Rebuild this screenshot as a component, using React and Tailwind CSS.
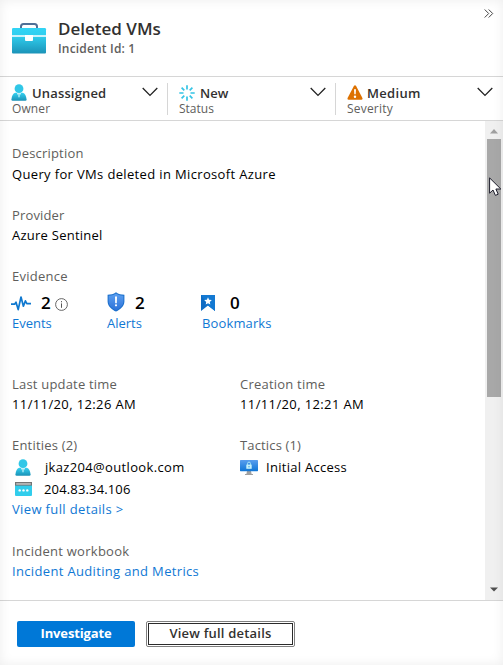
import React from 'react';

function Briefcase() {
  return (
    <svg width="35" height="32" viewBox="0 0 35 32" className="shrink-0">
      <defs>
        <linearGradient id="caseTop" x1="0" y1="0" x2="0" y2="1">
          <stop offset="0" stopColor="#32d4f5" />
          <stop offset="1" stopColor="#30cff0" />
        </linearGradient>
        <linearGradient id="caseBottom" x1="0" y1="0" x2="0" y2="1">
          <stop offset="0" stopColor="#2fcbeb" />
          <stop offset="1" stopColor="#1b93b8" />
        </linearGradient>
      </defs>
      <path d="M9 6.5V4.5Q9 2 11.5 2H22.5Q25 2 25 4.5V6.5" fill="none" stroke="#4f6f96" strokeWidth="2" />
      <path d="M1.2 6H32.8Q34 6 34 7.2V13.2H0V7.2Q0 6 1.2 6Z" fill="url(#caseTop)" />
      <path d="M0 14.8H34V30.6Q34 31.5 33 31.5H1Q0 31.5 0 30.6Z" fill="url(#caseBottom)" />
      <path d="M13 13H21V18Q21 19 20 19H14Q13 19 13 18Z" fill="#fff" />
    </svg>
  );
}

function Person({ className }) {
  return (
    <svg width="16" height="17" viewBox="0 0 16 17" className={className}>
      <defs>
        <linearGradient id="personFill" x1="0" y1="0" x2="0" y2="1">
          <stop offset="0" stopColor="#34d2f2" />
          <stop offset="1" stopColor="#1a91b6" />
        </linearGradient>
      </defs>
      <path d="M1.7 16.8Q.3 16.8 .4 15.5C.8 12 2 9.2 4.2 8.7H11.8C14 9.2 15.2 12 15.6 15.5Q15.7 16.8 14.3 16.8Z" fill="url(#personFill)" />
      <path d="M5.8 8.5L8 13.8L10.2 8.5Z" fill="#e8fafd" />
      <path d="M7.4 9.5H8.6L8.9 12L8 13.6L7.1 12Z" fill="#7fdcee" />
      <circle cx="8" cy="4.7" r="4.4" fill="#30c7e7" />
    </svg>
  );
}

function Burst() {
  return (
    <svg width="16" height="16" viewBox="0 0 16 16" fill="none" stroke="#35c4e5" strokeWidth="1.7" className="shrink-0">
      <path d="M8 .3V4.5M8 11.5V15.7M.3 8H4.5M11.5 8H15.7" />
      <path d="M2.6 2.6L5.3 5.3M10.7 10.7L13.4 13.4M2.6 13.4L5.3 10.7M10.7 5.3L13.4 2.6" />
    </svg>
  );
}

function Warning() {
  return (
    <svg width="16" height="15" viewBox="0 0 16 15" className="shrink-0">
      <path d="M6.9.9Q8 -.6 9.1.9L15.4 13Q15.9 14.6 14.3 14.8H1.7Q.1 14.6.6 13Z" fill="#dd7100" />
      <path d="M7 4.2H9L8.7 9.3H7.3Z" fill="#fff" />
      <circle cx="8" cy="11.7" r="1.2" fill="#fff" />
    </svg>
  );
}

function Chevron({ className }) {
  return (
    <svg width="16" height="10" viewBox="0 0 16 10" className={className}>
      <path d="M.7 1L8 8.4L15.3 1" fill="none" stroke="#222" strokeWidth="1.3" />
    </svg>
  );
}

function Pulse() {
  return (
    <svg width="20" height="17" viewBox="0 0 20 17" className="-ml-px shrink-0">
      <path d="M0 9.2H3.6L5 7.2L7.2 14.6L10 2L12.4 11.2L14.4 5.8L15.8 8.6H20" fill="none" stroke="#0f78cf" strokeWidth="1.7" strokeLinejoin="round" />
    </svg>
  );
}

function Shield() {
  return (
    <svg width="18" height="20" viewBox="0 0 18 20" className="-mt-[2px] shrink-0">
      <defs>
        <linearGradient id="shieldFill" x1="0" y1="0" x2="0" y2="1">
          <stop offset="0" stopColor="#5c9ff0" />
          <stop offset="1" stopColor="#2d72d8" />
        </linearGradient>
      </defs>
      <path d="M9 .3C11.5 2.2 14 2.6 17.4 2.7V9.5C17.4 14.5 12.5 18 9 19.6C5.5 18 .6 14.5 .6 9.5V2.7C4 2.6 6.5 2.2 9 .3Z" fill="#1a6fcb" />
      <path d="M9 1.6C11.4 3.2 13.7 3.7 16.4 3.8V9.4C16.4 13.6 12.2 16.9 9 18.4C5.8 16.9 1.6 13.6 1.6 9.4V3.8C4.3 3.7 6.6 3.2 9 1.6Z" fill="url(#shieldFill)" />
      <path d="M8 4.6H10L9.8 11.2H8.2Z" fill="#fff" />
      <circle cx="9" cy="13.3" r="1.1" fill="#fff" />
    </svg>
  );
}

function Bookmark() {
  return (
    <svg width="14" height="16" viewBox="0 0 14 16" className="-ml-px shrink-0">
      <path d="M0 0H14V16L7 10.5L0 16Z" fill="#0f6cc4" />
      <path d="M0 0H14V16L7 10.5Z" fill="#1379d2" />
      <path d="M7 2.3L8.1 4.8L10.8 5.1L8.8 6.9L9.3 9.6L7 8.2L4.7 9.6L5.2 6.9L3.2 5.1L5.9 4.8Z" fill="#fff" />
    </svg>
  );
}

function Info() {
  return (
    <svg width="13" height="13" viewBox="0 0 13 13" className="mt-[2px] ml-[4px] shrink-0">
      <circle cx="6.5" cy="6.5" r="5.9" fill="none" stroke="#555" strokeWidth=".9" />
      <path d="M6.5 5.4V9.8M6.5 3.1V4.3" stroke="#555" strokeWidth="1" />
    </svg>
  );
}

function IpIcon() {
  return (
    <svg width="17" height="14" viewBox="0 0 17 14" className="shrink-0">
      <path d="M0 0H17V13Q17 14 16 14H1Q0 14 0 13Z" fill="#31cdec" />
      <path d="M0 0H17V3.6H0Z" fill="#747474" />
      <path d="M1.2 1.2H15.8V2.7H1.2Z" fill="#c4c4c4" />
      <circle cx="4.7" cy="8.4" r="1.2" fill="#fff" />
      <circle cx="8.5" cy="8.4" r="1.2" fill="#fff" />
      <circle cx="12.3" cy="8.4" r="1.2" fill="#fff" />
    </svg>
  );
}

function Monitor() {
  return (
    <svg width="18" height="15" viewBox="0 0 18 15" className="mt-px shrink-0">
      <defs>
        <linearGradient id="screenFill" x1="0" y1="0" x2="0" y2="1">
          <stop offset="0" stopColor="#5a9eee" />
          <stop offset="1" stopColor="#0f76d6" />
        </linearGradient>
      </defs>
      <path d="M7 11H11L11.6 14H13V15H5V14H6.4Z" fill="#a0a0a0" />
      <rect width="18" height="11.2" rx=".6" fill="url(#screenFill)" />
      <rect x="6.3" y="4.6" width="5.4" height="4.2" fill="#c5effa" />
      <path d="M7.5 5V3.6Q7.5 2.1 9 2.1T10.5 3.6V5" fill="none" stroke="#a5e4f7" strokeWidth="1" />
      <path d="M9 6V7.4" stroke="#349fd8" />
    </svg>
  );
}

function Selector({ icon, value, label, valueClass, labelClass, className, chevronClass }) {
  return (
    <div className={`flex h-8 justify-between ${className}`}>
      <div>
        <div className="flex h-[17px] items-center">
          {icon}
          <span className={`font-semibold text-[#323130] ${valueClass}`}>{value}</span>
        </div>
        <div className={`text-[12px] leading-[15px] text-[#605e5c] ${labelClass}`}>{label}</div>
      </div>
      <Chevron className={`mt-[3px] shrink-0 ${chevronClass}`} />
    </div>
  );
}

function Evidence({ icon, count, label, countClass, labelClass, info }) {
  return (
    <div className="w-[95px]">
      <div className="flex h-5 items-center">
        {icon}
        <span className={`text-[17px] font-semibold text-black ${countClass}`}>{count}</span>
        {info && <Info />}
      </div>
      <div className={`text-[#0f78d4] ${labelClass}`}>{label}</div>
    </div>
  );
}

export default function App() {
  return (
    <div className="relative flex h-[665px] w-[503px] flex-col overflow-hidden bg-white font-['Open_Sans','Noto_Sans',sans-serif] text-[13px] leading-5 whitespace-nowrap text-black">
      <header className="flex h-[77px] shrink-0 justify-between border-b border-[#d6d6d6] pl-3">
        <div className="flex">
          <div className="pt-[22px]"><Briefcase /></div>
          <div className="pt-[17px] pl-[11px]">
            <h1 className="text-[17px] leading-6 font-semibold text-[#323130]">Deleted VMs</h1>
            <p className="text-[12px] leading-[15px] font-semibold tracking-[0.18px] text-[#605e5c]">Incident Id: 1</p>
          </div>
        </div>
        <svg width="10" height="9" viewBox="0 0 10 9" className="mt-[9px] mr-[9px]" fill="none" stroke="#444" strokeWidth="1">
          <path d="M.7 .5L4.7 4.5L.7 8.5M4.7 .5L8.7 4.5L4.7 8.5" />
        </svg>
      </header>

      <section className="flex h-11 shrink-0 border-b border-[#d6d6d6] pt-[6px] pl-[11px]">
        <Selector icon={<Person className="shrink-0" />} value="Unassigned" label="Owner" valueClass="ml-[5px] tracking-[0.15px]" labelClass="pl-px tracking-[0.1px]" className="w-[157px] border-r border-[#d6d6d6] pt-px" chevronClass="mr-[9px]" />
        <Selector icon={<Burst />} value="New" label="Status" valueClass="ml-[5px]" labelClass="" className="w-[168px] border-r border-[#d6d6d6] pt-px pl-[11px]" chevronClass="mr-[9px]" />
        <Selector icon={<Warning />} value="Medium" label="Severity" valueClass="ml-[4px] tracking-[0.3px]" labelClass="tracking-[0.2px]" className="w-[157px] pt-px pl-[11px]" chevronClass="" />
      </section>

      <main className="flex h-[479px] shrink-0">
        <div className="w-[485px] pt-[22px] pl-[12px]">
          <p className="tracking-[0.2px] text-[#605e5c]">Description</p>
          <p className="mt-px tracking-[0.35px]">Query for VMs deleted in Microsoft Azure</p>
          <p className="mt-[21px] tracking-[0.15px] text-[#605e5c]">Provider</p>
          <p className="tracking-[0.25px]">Azure Sentinel</p>
          <p className="mt-[21px] tracking-[0.25px] text-[#605e5c]">Evidence</p>
          <div className="flex pt-[7px]">
            <Evidence icon={<Pulse />} count="2" label="Events" countClass="ml-[10px]" labelClass="" info />
            <Evidence icon={<Shield />} count="2" label="Alerts" countClass="ml-[10px]" labelClass="" />
            <Evidence icon={<Bookmark />} count="0" label="Bookmarks" countClass="ml-[15px]" labelClass="tracking-[0.13px]" />
          </div>
          <div className="mt-[41px] flex">
            <div className="w-[228px]">
              <p className="tracking-[0.2px] text-[#605e5c]">Last update time</p>
              <p className="tracking-[0.38px]">11/11/20, 12:26 AM</p>
            </div>
            <div>
              <p className="tracking-[0.22px] text-[#605e5c]">Creation time</p>
              <p className="tracking-[0.38px]">11/11/20, 12:21 AM</p>
            </div>
          </div>
          <div className="mt-[21px] flex">
            <div className="w-[228px]">
              <p className="tracking-[0.2px] text-[#605e5c]">Entities (2)</p>
              <div className="mt-px flex h-[22px] items-center pl-[3px]"><Person className="shrink-0" /><span className="ml-[14px] tracking-[0.34px]">jkaz204@outlook.com</span></div>
              <div className="flex h-[22px] items-center pl-[3px]"><IpIcon /><span className="ml-[12px] tracking-[0.15px]">204.83.34.106</span></div>
              <p className="-mt-px tracking-[0.36px] text-[#0f78d4]">View full details &gt;</p>
            </div>
            <div>
              <p className="tracking-[0.15px] text-[#605e5c]">Tactics (1)</p>
              <div className="mt-px flex h-[22px] items-center"><Monitor /><span className="ml-[8px] tracking-[0.28px]">Initial Access</span></div>
            </div>
          </div>
          <p className="mt-[22px] tracking-[0.27px] text-[#605e5c]">Incident workbook</p>
          <p className="tracking-[0.34px] text-[#0f78d4]">Incident Auditing and Metrics</p>
        </div>
        <div className="flex w-[18px] flex-col items-center bg-[#f0f0f0]">
          <svg width="8" height="5" viewBox="0 0 8 5" className="mt-[8px]"><path d="M4 0L8 4.5H0Z" fill="#a0a0a0" /></svg>
          <div className="mt-[5px] h-[258px] w-[14px] bg-[#a8a8a8]" />
          <svg width="8" height="5" viewBox="0 0 8 5" className="mt-auto mb-[8px]"><path d="M0 .5H8L4 4.5Z" fill="#505050" /></svg>
        </div>
      </main>

      <footer className="flex h-[65px] shrink-0 border-t border-[#d6d6d6] pt-5 pl-[17px]">
        <button className="h-[26px] w-[118px] rounded-[2px] bg-[#0078d7] pb-px text-[13px] leading-none font-bold tracking-[-0.15px] text-white">Investigate</button>
        <button className="ml-[11px] h-[26px] w-[149px] rounded-[2px] border border-[#808080] p-px">
          <span className="flex h-full w-full items-center justify-center border border-[#2b2b2b] pb-[2px] font-semibold tracking-[0.2px] text-[#323130]">View full details</span>
        </button>
      </footer>

      <div className="pointer-events-none absolute inset-0 shadow-[inset_0_0_12px_rgba(0,0,0,0.07)]" />
      <svg width="13" height="20" viewBox="0 0 13 20" className="absolute top-[177px] left-[489px]">
        <path d="M.6 .9V16.2L4 13L6.4 18.4L9.2 17.2L6.9 12H11.8Z" fill="#fff" stroke="#1d1d2b" strokeWidth="1" />
      </svg>
    </div>
  );
}
